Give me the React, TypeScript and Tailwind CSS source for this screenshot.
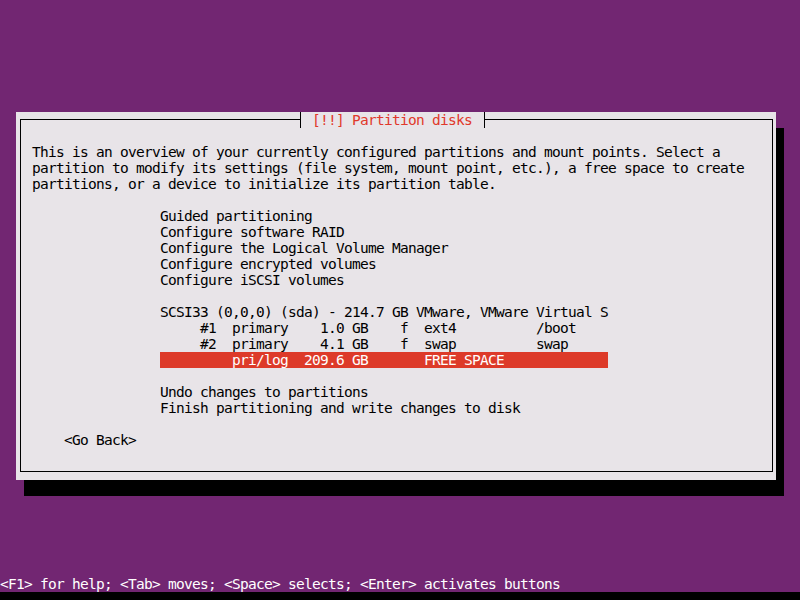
import React from 'react';

// Terminal grid: 8px columns, 16px rows
const intro = [
  'This is an overview of your currently configured partitions and mount points. Select a',
  'partition to modify its settings (file system, mount point, etc.), a free space to create',
  'partitions, or a device to initialize its partition table.',
];

const actions = [
  'Guided partitioning',
  'Configure software RAID',
  'Configure the Logical Volume Manager',
  'Configure encrypted volumes',
  'Configure iSCSI volumes',
];

const partitions = [
  { text: 'SCSI33 (0,0,0) (sda) - 214.7 GB VMware, VMware Virtual S', selected: false },
  { text: '     #1  primary    1.0 GB    f  ext4          /boot', selected: false },
  { text: '     #2  primary    4.1 GB    f  swap          swap', selected: false },
  { text: '         pri/log  209.6 GB       FREE SPACE', selected: true },
];

const finish = ['Undo changes to partitions', 'Finish partitioning and write changes to disk'];

function Row({ children, className = '' }: { children: React.ReactNode; className?: string }) {
  return <div className={`h-4 leading-4 whitespace-pre ${className}`}>{children}</div>;
}

export default function App() {
  return (
    <div
      className="w-[800px] h-[600px] bg-[#722672] flex flex-col overflow-hidden text-[14.5px] tracking-[-0.73px] text-black"
      style={{ fontFamily: '"DejaVu Sans Mono", "Liberation Mono", monospace' }}
    >
      <div className="h-[112px]" />

      {/* Dialog */}
      <div className="ml-4 w-[760px] h-[368px] bg-[#e8e4e8] shadow-[8px_16px_0_0_#000] pl-[4px] pt-[7px] pr-[3px] pb-[8px]">
        <div className="relative h-full border border-black">
          <div className="absolute left-[279px] -top-[8px] h-4 w-[185px] bg-[#e8e4e8] border-x border-black pl-[11px]">
            <Row className="text-[#e0392b]">[!!] Partition disks</Row>
          </div>

          <div className="pl-[11px] pt-[24px] flex flex-col">
            {intro.map((l) => (
              <Row key={l}>{l}</Row>
            ))}
            <Row> </Row>

            <div className="ml-[128px] flex flex-col">
              {actions.map((l) => (
                <Row key={l}>{l}</Row>
              ))}
              <Row> </Row>
              {partitions.map((p) => (
                <Row key={p.text} className={p.selected ? 'w-[448px] bg-[#dd3a29] text-white' : ''}>
                  {p.text}
                </Row>
              ))}
              <Row> </Row>
              {finish.map((l) => (
                <Row key={l}>{l}</Row>
              ))}
            </div>

            <Row> </Row>
            <Row className="ml-[32px]">&lt;Go Back&gt;</Row>
          </div>
        </div>
      </div>

      <div className="h-[96px]" />
      <Row className="text-white">
        &lt;F1&gt; for help; &lt;Tab&gt; moves; &lt;Space&gt; selects; &lt;Enter&gt; activates buttons
      </Row>
      <div className="h-2 bg-black" />
    </div>
  );
}
